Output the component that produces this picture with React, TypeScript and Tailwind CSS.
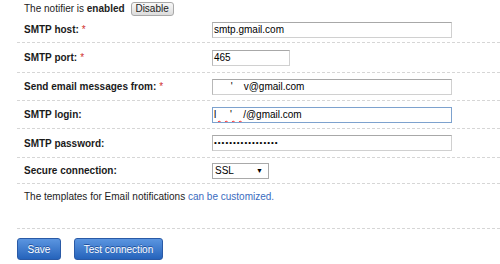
import type { ReactNode } from "react";

const font = { fontFamily: '"Liberation Sans", Arial, sans-serif' };

function Field({ w, focus, children }: { w: string; focus?: boolean; children: ReactNode }) {
  return (
    <div
      className={
        "flex h-[16px] items-center overflow-hidden whitespace-pre border bg-white pl-[1px] text-[10px] leading-none text-black " +
        w +
        (focus
          ? " border-[#7da2ce]"
          : " border-[#d0d0d0] border-t-[#a8a8a8] border-l-[#b8b8b8]")
      }
    >
      {children}
    </div>
  );
}

function Row({ label, req, h, children }: { label: string; req?: boolean; h: string; children: ReactNode }) {
  return (
    <div className={"flex items-center border-b border-dashed border-[#d6d6d6] pl-[7px] " + h}>
      <div className="w-[188px] text-[10px] font-bold text-[#1a1a1a]">
        {label}
        {req && <span className="ml-[3px] font-normal text-[#d0312d]">*</span>}
      </div>
      {children}
    </div>
  );
}

export default function App() {
  return (
    <div className="h-[264px] w-[500px] overflow-hidden bg-white" style={font}>
      <div className="flex h-[17px] items-center pl-[24px] text-[10px] text-[#222]">
        <span>
          The notifier is <b>enabled</b>
        </span>
        <button className="ml-[6px] h-[14px] w-[43px] rounded-[3px] border border-[#a9a9a9] bg-gradient-to-b from-[#f8f8f8] to-[#dcdcdc] text-[10px] leading-none text-[#222]">
          Disable
        </button>
      </div>

      <div className="ml-[17px]">
        <Row label="SMTP host:" req h="h-[26px]">
          <Field w="w-[240px]">smtp.gmail.com</Field>
        </Row>
        <Row label="SMTP port:" req h="h-[30px]">
          <Field w="w-[78px]">465</Field>
        </Row>
        <Row label="Send email messages from:" req h="h-[28px]">
          <Field w="w-[240px]">{"      '    v@gmail.com"}</Field>
        </Row>
        <Row label="SMTP login:" h="h-[28px]">
          <Field w="w-[240px]" focus>
            <span className="underline decoration-wavy decoration-[#ff2020] decoration-[1px] underline-offset-[2px]">
              {"l     '    "}
            </span>
            {"/@gmail.com"}
          </Field>
        </Row>
        <Row label="SMTP password:" h="h-[29px]">
          <Field w="w-[240px]">
            <span className="text-[8px] tracking-[1px]">{"•••••••••••••••••"}</span>
          </Field>
        </Row>
        <Row label="Secure connection:" h="h-[26px]">
          <div className="flex h-[16px] w-[57px] items-center justify-between border border-[#a9a9a9] bg-white pl-[2px] pr-[5px] text-[10px] leading-none text-black">
            <span>SSL</span>
            <span className="text-[7px]">▼</span>
          </div>
        </Row>

        <div className="flex h-[25px] items-center pl-[7px] text-[10px] text-[#222]">
          <span>
            The templates for Email notifications{" "}
            <span className="text-[#3a6cc0]">can be customized.</span>
          </span>
        </div>
        <div className="h-[20px] border-b border-dashed border-[#d6d6d6]" />

        <div className="mt-[9px] flex gap-[13px]">
          <button className="h-[22px] w-[44px] rounded-[3px] border border-[#2a5aa6] bg-gradient-to-b from-[#5b95e0] to-[#2563bb] text-[10px] text-white [text-shadow:0_-1px_0_#1d4e99]">
            Save
          </button>
          <button className="h-[22px] w-[89px] rounded-[3px] border border-[#2a5aa6] bg-gradient-to-b from-[#5b95e0] to-[#2563bb] text-[10px] text-white [text-shadow:0_-1px_0_#1d4e99]">
            Test connection
          </button>
        </div>
      </div>
    </div>
  );
}
